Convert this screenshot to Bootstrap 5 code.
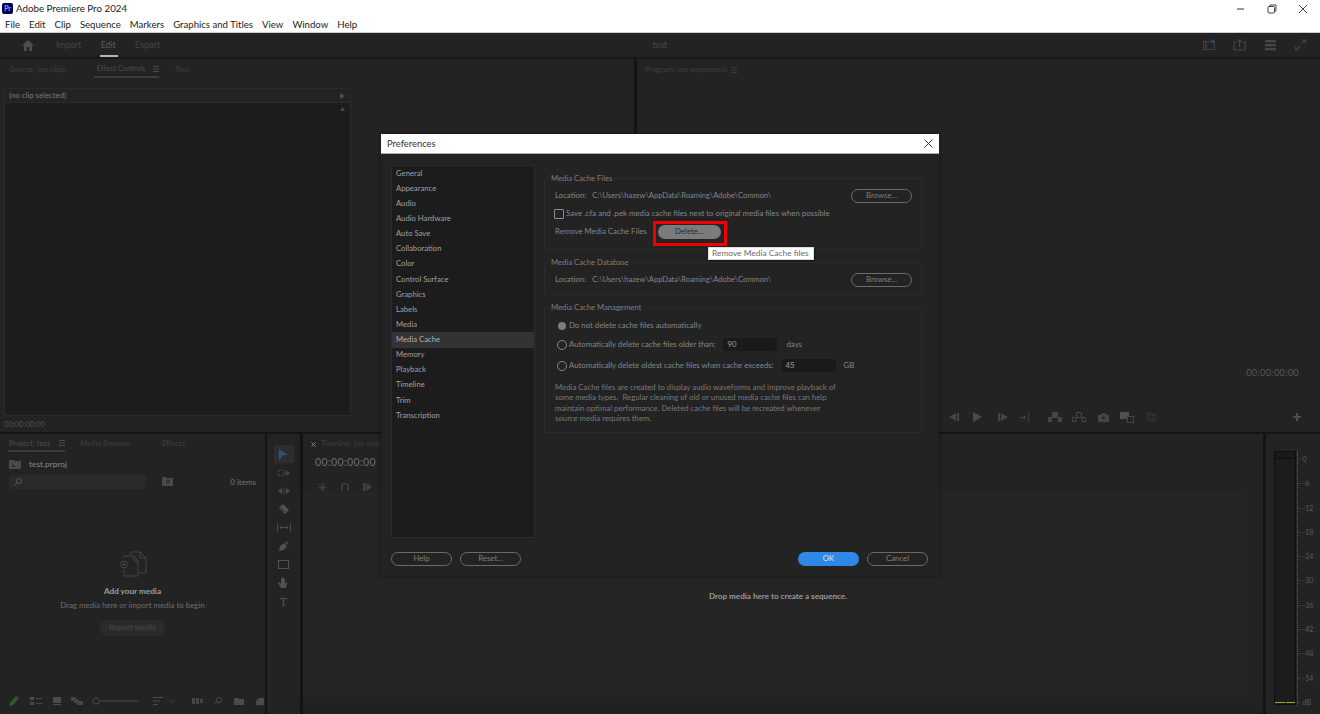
<!doctype html>
<html lang="en">
<head>
<meta charset="utf-8">
<title>Adobe Premiere Pro 2024</title>
<link href="https://cdn.jsdelivr.net/npm/bootstrap@5.3.0/dist/css/bootstrap.min.css" rel="stylesheet">
<style>
html,body{height:714px;overflow:hidden;background:#141414}
body{font-family:"Lato","Noto Sans",sans-serif;font-size:7.8px;line-height:1;color:#858585;position:relative}
svg{display:block;flex:none}
.win-head{height:33px;background:#fff;color:#222;font-family:"Lato","Noto Sans",sans-serif;flex:none;border-bottom:1px solid #ccc}
.win-title{height:17px;font-size:9.750px;padding-left:2px}
.pr-logo{width:11px;height:11px;background:#00005b;color:#9a9aff;font-size:7px;font-weight:700;border-radius:2px;margin-right:3px;letter-spacing:-.3px;line-height:11px;text-align:center}
.win-ctrl{width:31.500px;height:14px;display:flex;align-items:center;justify-content:center}
.win-ctrls{padding-right:1px}
.win-menu{height:15px;font-size:9.600px;padding-left:5px;gap:9px}
.top-bar{height:26px;background:#232323;border-bottom:2px solid #171717;flex:none;color:#444;font-size:8.600px;position:relative}
.top-nav{padding-left:22px;gap:19.500px}
.top-nav svg{margin-right:2.500px}
.nav-edit{color:#5f5f5f;position:relative;height:100%;display:flex;align-items:center}
.nav-edit::after{content:"";position:absolute;left:-1px;right:-2px;bottom:0;height:2px;background:#b5b5b5}
.top-name{position:absolute;left:0;right:0;top:8px;text-align:center;color:#4a4a4a;pointer-events:none}
.top-tools{gap:17.500px;padding-right:13px}
.work-row{gap:3px;flex:none}
.pane{background:#232323;position:relative;min-width:0}
.tab-row{height:21px;color:#3f3f3f;font-size:7.700px;flex:none}
.tab-low{height:20px}
.tab-on{color:#4c4c4c;border-bottom:2px solid #3c3c3c;padding:0 0 3px 2px;margin-bottom:-4px}
.upper-left{width:634px;height:373px;padding:0 4px}
.upper-right{flex:1;height:373px;padding:0 7px 0 8px}
.src-tab{padding-left:6px}
.src-tab>span:first-child{margin-right:28px}
.src-tab>.tab-on{margin-right:16px;letter-spacing:-.1px}
.src-tab svg{margin-left:7px}
.fx-head{width:347px;height:15px;margin-top:8px;background:#232323;border:1px solid #2a2a2a;color:#7b7b7b;padding:0 5px 0 4px;flex:none}
.fx-body{width:347px;height:313px;background:#1c1c1c;border:1px solid #2a2a2a;border-top:0;padding:4px 5px;flex:none}
.mini-time{color:#505050;height:18px;flex:none;font-size:7.600px}
.prog-time{color:#585858;font-size:9.200px;letter-spacing:.3px;margin-top:288px;margin-right:14px;text-align:right}
.prog-tools{margin-top:33px;height:14px;padding-left:304px;padding-right:12px}
.prog-tools svg:nth-child(1){margin-right:14px}
.prog-tools svg:nth-child(2){margin-right:16px}
.prog-tools svg:nth-child(3){margin-right:12px}
.prog-tools svg:nth-child(4){margin-right:17px}
.prog-tools svg:nth-child(5){margin-right:10px}
.prog-tools svg:nth-child(6){margin-right:12px}
.prog-tools svg:nth-child(7){margin-right:11px}
.prog-tools svg:nth-child(8){margin-right:13px}
.lower-row{gap:2px;height:280px;margin-top:2px;flex:none}
.proj{width:265px;padding:0 9px}
.tools{width:33px;padding-top:11px}
.tool{height:18.400px;width:20px;display:flex;align-items:center;justify-content:center}
.tool-on{background:#2d2d2d;border-radius:2px}
.serif-t{font-family:"Liberation Serif",serif;font-size:13px;color:#565656}
.tl{flex:1;position:relative;margin-left:1px}
.meter-pane{width:54px;padding:17px 0 9px 8px;margin-left:1px}
.meter{width:22px;height:254px;background:#1c1c1c;border:1px solid #0f0f0f;position:relative;flex:none}
.meter-top{height:7px;border-bottom:1px solid #0f0f0f;background:#1a1a1a}
.meter-top>div{flex:1}
.meter-top>div+div{border-left:1px solid #0f0f0f}
.meter-low{position:absolute;left:0;right:0;bottom:1px;gap:1px}
.meter-low>div{flex:1;height:1px;background:#a5a526}
.scale{height:255px;padding:5px 0 0 0;color:#5c5c5c;font-size:7px;border-left:1px dotted #5e5e5e;margin-left:1px}
.scale span::before{content:"-";margin-right:2px;color:#5c5c5c}
.proj-tab>.tab-on{margin-left:-1px;padding-left:1px;width:57px;justify-content:space-between}
.proj-tab>span:nth-child(2){margin-left:15px}
.proj-tab>span:nth-child(3){margin-left:31px}
.name-row{height:19px;margin-top:.500px;color:#8a8a8a;font-size:8.400px}
.search-row{height:16px}
.count-txt{color:#767676;font-size:8px}
.search-box{width:137px;height:14px;background:#2a2a2a;border-radius:2px;padding-left:5px;flex:none}
.empty-zone{position:absolute;left:0;width:265px;top:117px;text-align:center}
.add-title{color:#9e9e9e;font-size:8.200px;margin-top:10px}
.add-sub{color:#6d6d6d;margin-top:7px;font-size:7.900px}
.media-btn{width:65px;height:16px;background:#2b2b2b;color:#444;border-radius:8px;font-weight:700;margin:10px auto 0;font-size:7.900px}
.proj-foot{position:absolute;left:9px;top:261px;height:12px}
.proj-foot svg:nth-child(1){margin-right:10px}
.proj-foot svg:nth-child(2){margin-right:11px}
.proj-foot svg:nth-child(3){margin-right:10px}
.proj-foot svg:nth-child(4){margin-right:9px}
.proj-foot svg:nth-child(5){margin-right:14px}
.proj-foot svg:nth-child(6){margin-right:7px}
.proj-foot svg:nth-child(7){margin-right:17px}
.proj-foot svg:nth-child(8){margin-right:11px}
.proj-foot svg:nth-child(9){margin-right:12px}
.proj-foot svg:nth-child(10){margin-right:12px}
.tl-foot{position:absolute;left:0;right:0;bottom:0;height:17px;background:#212121}
.tl-main{position:absolute;left:0;right:17px;top:59px;bottom:17px;background:#252525}
.drop-msg{position:absolute;left:0;right:10px;top:158px;text-align:center;color:#9a9a9a;font-weight:700;font-size:8.100px;z-index:1}
.tl-time{color:#6e6e6e;font-size:10.500px;letter-spacing:.4px;margin:3px 0 0 12px}
.tl-name{margin-left:5px}
.tl-icons{gap:14px;margin:15px 0 0 15px}
.dialog-win{position:absolute;left:381px;top:134px;width:558px;height:442px;background:#232323;box-shadow:0 0 4px rgba(0,0,0,.45);font-size:7.800px}
.dlg-head{height:20px;background:#fff;color:#333;font-family:"Lato","Noto Sans",sans-serif;font-size:9.400px;padding:0 6px;flex:none;border-bottom:1px solid #aaa}
.dlg-main{height:398px;padding:11px 17px 0 10px;gap:9px;flex:none}
.side-list{width:144px;height:373px;background:#1c1c1c;border:1px solid #2c2c2c;padding:0;flex:none}
.side-item{height:15.125px;padding-left:4px;color:#a0a0a0;font-size:7.700px}
.side-on{background:#333;color:#b0b0b0}
.right-col{flex:1;min-width:0;padding-top:13px}
.grp{border:1px solid #2b2b2b;border-radius:2px;padding:0 9px 0 10px;position:relative;flex:none}
.grp-label{position:absolute;left:4px;top:-4px;background:#232323;padding:0 2px;color:#7f7f7f;font-size:7.700px;white-space:nowrap}
.grp-a{height:72px;padding-top:7px}
.grp-b{height:33px;margin-top:12px;padding-top:7px}
.grp-c{height:126px;margin-top:12px;padding-top:10px;padding-left:12px}
.browse-btn,.foot-btn{height:14px;border:1px solid #6a6a6a;border-radius:7px;color:#7f7f7f;width:61px;background:transparent;display:flex;align-items:center;justify-content:center}
.line-row{height:19px}
.save-row{height:17.500px}
.path-txt{margin-left:6px;font-size:7.550px}
.chk{width:10px;height:10px;border:1px solid #8a8a8a;border-radius:1px;margin:0 2px 0 -1px;flex:none}
.remove-row{height:19px;position:relative}
.del-slot{padding:1px 3px 0 2px;border:3px solid #f00000;margin:3px 0 0 6px;background:#232323;width:74px;height:25px;flex:none}
.del-btn{height:14px;width:63px;background:#7b7b7b;border-radius:7px;color:#2a2a2a;display:flex;align-items:center;justify-content:center}
.tip{position:absolute;left:153px;top:24.500px;width:106px;height:13px;background:#fff;color:#6b6b6b;border:1px solid #ddd;font-size:8.400px;padding-left:3px;box-shadow:1px 1px 2px rgba(0,0,0,.5);display:flex;align-items:center;white-space:nowrap;z-index:5}
.radio-on,.radio-off{width:10px;height:10px;border-radius:50%;margin-right:2px;flex:none}
.radio-on{background:#7d7d7d;transform:scale(.8)}
.radio-off{border:1px solid #8a8a8a}
.opt-one{height:16px}
.opt-row{height:21px}
.num-in{background:#1a1a1a;color:#a0a0a0;border-radius:2px;height:13.500px;padding-left:4px;display:flex;align-items:center;width:54px;margin:0 9px 0 8px}
.gb-txt{margin-left:-1px}
.note{color:#787878;margin:6px 0 0 -2px;line-height:10.350px;white-space:nowrap}
.dlg-foot{padding:0 11px 0 10px;flex:none;height:14px}
.dlg-foot>span:nth-child(1){margin-right:8px}
.dlg-foot>span:nth-child(3){margin-right:8px}
.ok-btn{background:#2d88e6;border:0;color:#d8e8fa;width:61px;height:14px;border-radius:7px;display:flex;align-items:center;justify-content:center}
</style>
</head>
<body class="d-flex flex-column">

<header class="win-head d-flex flex-column">
  <div class="win-title d-flex align-items-center">
    <div class="pr-logo">Pr</div><span>Adobe Premiere Pro 2024</span>
    <div class="win-ctrls d-flex ms-auto">
      <div class="win-ctrl"><svg width="9" height="9" viewBox="0 0 9 9"><path d="M1 5h7" stroke="#555" stroke-width="1.2"/></svg></div>
      <div class="win-ctrl"><svg width="10" height="10" viewBox="0 0 10 10" fill="none" stroke="#444"><rect x="1" y="2.500" width="6.500" height="6.500" rx="1"/><path d="M3 2.500V1h6v6H7.500"/></svg></div>
      <div class="win-ctrl"><svg width="10" height="10" viewBox="0 0 10 10"><path d="M1 1l8 8M9 1l-8 8" stroke="#444"/></svg></div>
    </div>
  </div>
  <nav class="win-menu d-flex align-items-center"><span>File</span><span>Edit</span><span>Clip</span><span>Sequence</span><span>Markers</span><span>Graphics and Titles</span><span>View</span><span>Window</span><span>Help</span></nav>
</header>

<div class="top-bar d-flex align-items-center">
  <div class="top-nav d-flex align-items-center h-100">
    <svg width="12" height="11" viewBox="0 0 13 12"><path d="M6.500 0L13 6h-2v6H8V8H5v4H2V6H0z" fill="#4d4d4d"/></svg>
    <span>Import</span><span class="nav-edit">Edit</span><span>Export</span>
  </div>
  <div class="top-name">test</div>
  <div class="top-tools d-flex ms-auto align-items-center">
    <svg width="13" height="12" viewBox="0 0 13 12" fill="none" stroke="#404040"><rect x=".5" y="2.500" width="11" height="8" stroke-width="1.2"/><path d="M3 3v7" stroke-width="1.500"/><circle cx="10" cy="2.500" r="2" fill="#214a76" stroke="none"/></svg>
    <svg width="13" height="12" viewBox="0 0 13 12" fill="none" stroke="#454545" stroke-width="1.2"><path d="M3.500 3H1v8h11V3H9.500M6.500 8V1M4.500 2.800l2-2 2 2"/></svg>
    <svg width="13" height="12" viewBox="0 0 13 12" fill="#454545"><rect x="1" y="1" width="11" height="2.400"/><rect x="1" y="5" width="11" height="2.400"/><rect x="1" y="9" width="11" height="2.400"/></svg>
    <svg width="13" height="12" viewBox="0 0 13 12" fill="none" stroke="#404040" stroke-width="1.2"><path d="M2 11l4-4M7 5l4-4M8 1h3.500v3.500M1.500 7.500V11H5"/></svg>
  </div>
</div>

<main class="work-row d-flex">
  <section class="pane upper-left d-flex flex-column">
    <div class="tab-row src-tab d-flex align-items-center">
      <span>Source: (no clips)</span>
      <span class="tab-on d-flex align-items-center">Effect Controls<svg width="6" height="6" viewBox="0 0 6 6"><path d="M0 .5h6M0 3h6M0 5.500h6" stroke="#4a4a4a"/></svg></span>
      <span>Text</span>
    </div>
    <div class="fx-head d-flex align-items-center justify-content-between">(no clip selected)<svg width="5" height="6" viewBox="0 0 5 6"><path d="M0 0l5 3-5 3z" fill="#4b4b4b"/></svg></div>
    <div class="fx-body d-flex justify-content-end"><svg width="5" height="4" viewBox="0 0 5 4"><path d="M2.500 0L5 4H0z" fill="#484848"/></svg></div>
    <div class="mini-time d-flex align-items-center">00:00:00:00</div>
  </section>
  <section class="pane upper-right d-flex flex-column">
    <div class="tab-row d-flex align-items-center">
      <span>Program: (no sequences)</span>
      <svg class="ms-1" width="6" height="6" viewBox="0 0 6 6"><path d="M0 .5h6M0 3h6M0 5.500h6" stroke="#3e3e3e"/></svg>
    </div>
    <div class="prog-time">00:00:00:00</div>
    <div class="prog-tools d-flex align-items-center">
      <svg width="10" height="8" viewBox="0 0 10 8" fill="#454545"><path d="M7 0v8L0 4zM8 0h2v8H8z"/></svg>
      <svg width="9" height="10" viewBox="0 0 9 10" fill="#4a4a4a"><path d="M0 0l9 5-9 5z"/></svg>
      <svg width="10" height="8" viewBox="0 0 10 8" fill="#454545"><path d="M3 0v8l7-4zM0 0h2v8H0z"/></svg>
      <svg width="11" height="9" viewBox="0 0 11 9" fill="none" stroke="#454545"><path d="M0 4.500h5M3.500 2.500l2 2-2 2M9 0c-1 1 0 3-1 4.500C9 6 8 8 9 9"/></svg>
      <svg width="14" height="10" viewBox="0 0 14 10" fill="#454545"><path d="M0 5h4v5H0zM10 5h4v5h-4zM4 0h6v6H4z"/></svg>
      <svg width="14" height="10" viewBox="0 0 14 10" fill="none" stroke="#454545"><path d="M.5 5.500h3.500v4H.5zM10 5.500h3.500v4H10zM4.500.500h5v5h-5z"/></svg>
      <svg width="11" height="9" viewBox="0 0 11 9" fill="#454545"><path d="M0 2h3l1-2h3l1 2h3v7H0z"/><circle cx="5.500" cy="5" r="1.500" fill="#232323"/></svg>
      <svg width="14" height="11" viewBox="0 0 14 11"><rect x="0" y="0" width="9" height="7" fill="#505050"/><rect x="7.500" y="4.500" width="6" height="6" fill="#232323" stroke="#454545"/></svg>
      <svg width="9" height="9" viewBox="0 0 9 9" fill="none" stroke="#3e3e3e" stroke-dasharray="1.500 1"><rect x=".5" y=".5" width="6" height="6"/><rect x="2.500" y="2.500" width="6" height="6"/></svg>
      <svg class="ms-auto" width="8" height="8" viewBox="0 0 8 8"><path d="M4 0v8M0 4h8" stroke="#4c4c4c" stroke-width="2"/></svg>
    </div>
  </section>
</main>

<section class="lower-row d-flex">
  <div class="pane proj">
    <div class="tab-row tab-low proj-tab d-flex align-items-center">
      <span class="tab-on d-flex align-items-center">Project: test<svg width="6" height="6" viewBox="0 0 6 6"><path d="M0 .5h6M0 3h6M0 5.500h6" stroke="#4a4a4a"/></svg></span>
      <span>Media Browser</span>
      <span>Effects</span>
    </div>
    <div class="name-row d-flex align-items-center">
      <svg width="12" height="9" viewBox="0 0 12 9"><path d="M0 0h5l1 1h6v8H0z" fill="#4a4a4a"/><path d="M3 6.500h3M4 4v2" stroke="#232323"/></svg>
      <span class="ms-2">test.prproj</span>
    </div>
    <div class="search-row d-flex align-items-center">
      <div class="search-box d-flex align-items-center"><svg width="8" height="8" viewBox="0 0 8 8" fill="none" stroke="#555"><circle cx="5" cy="3" r="2.500"/><path d="M3 5L.5 7.500"/></svg></div>
      <svg class="ms-3" width="11" height="9" viewBox="0 0 11 9"><path d="M0 0h4l1 1h6v8H0z" fill="#4a4a4a"/><circle cx="6" cy="4.500" r="1.500" fill="none" stroke="#232323"/></svg>
      <span class="ms-auto count-txt">0 items</span>
    </div>
    <div class="empty-zone">
      <svg class="mx-auto" width="28" height="26" viewBox="0 0 28 26" fill="none" stroke="#454545"><path d="M12 4V1h9l6 6v15h-8"/><path d="M5 7V5h10l4 5v15H5v-6"/><path d="M21 1v6h6M15 5v5h4"/><circle cx="5" cy="13.500" r="3.500"/><path d="M3 13.500h4M5 11.500v4"/></svg>
      <div class="fw-bold add-title">Add your media</div>
      <div class="add-sub">Drag media here or import media to begin</div>
      <div class="media-btn d-flex align-items-center justify-content-center">Import media</div>
    </div>
    <div class="proj-foot d-flex align-items-center">
      <svg width="11" height="10" viewBox="0 0 11 10"><path d="M0 10l1-3 6-7 3 2-6 7z" fill="#2e5e27"/></svg>
      <svg width="12" height="8" viewBox="0 0 12 8" fill="#4a4a4a"><rect width="4" height="3"/><rect y="5" width="4" height="3"/><rect x="6" y="1" width="6" height="1"/><rect x="6" y="6" width="6" height="1"/></svg>
      <svg width="8" height="8" viewBox="0 0 8 8" fill="#4c4c4c"><rect width="8" height="6"/><rect y="7" width="8" height="1"/></svg>
      <svg width="12" height="8" viewBox="0 0 12 8" fill="#454545"><rect width="5" height="4"/><rect x="3" y="2" width="5" height="4"/><rect x="6" y="4" width="6" height="4"/></svg>
      <svg width="47" height="8" viewBox="0 0 47 8" fill="none" stroke="#4c4c4c"><circle cx="4" cy="4" r="3.200"/><path d="M8 4h39" stroke-width="1.200"/></svg>
      <svg width="10" height="8" viewBox="0 0 10 8" stroke="#4c4c4c"><path d="M0 .5h10M0 4h7M0 7.500h5"/></svg>
      <svg width="5" height="3" viewBox="0 0 5 3" fill="none" stroke="#3e3e3e"><path d="M0 0l2.500 2.500L5 0"/></svg>
      <svg width="11" height="6" viewBox="0 0 11 6" fill="#464646"><rect width="3" height="6"/><rect x="4" width="3" height="6"/><rect x="8" y="1" width="3" height="4"/></svg>
      <svg width="8" height="8" viewBox="0 0 8 8" fill="none" stroke="#4a4a4a"><circle cx="5" cy="3" r="2.500"/><path d="M3 5L.5 7.500"/></svg>
      <svg width="10" height="7" viewBox="0 0 10 7"><path d="M0 0h4l1 1h5v6H0z" fill="#4b4b4b"/></svg>
      <svg width="8" height="7" viewBox="0 0 8 7"><path d="M3 0h5v7H0V3z" fill="#4a4a4a"/></svg>
    </div>
  </div>

  <div class="pane tools d-flex flex-column align-items-center">
    <div class="tool tool-on"><svg width="9" height="11" viewBox="0 0 9 11"><path d="M0 0l9 6H5l-1 0-4 5z" fill="#31537a"/></svg></div>
    <div class="tool"><svg width="12" height="8" viewBox="0 0 12 8" fill="none" stroke="#4c4c4c"><path d="M.5 1.500h7M.5 6.500h7M.5 1.500v5" stroke-dasharray="1.500 1"/><path d="M5 4h5M8.500 2l2.500 2-2.500 2" stroke-width="1.200"/></svg></div>
    <div class="tool"><svg width="12" height="8" viewBox="0 0 12 8" fill="#4c4c4c"><path d="M5.600 0h.8v8h-.8zM0 4l4-3v6zM12 4L8 1v6z"/></svg></div>
    <div class="tool"><svg width="10" height="10" viewBox="0 0 10 10" fill="#515151"><path d="M4 0l6 6-4 4-6-6z"/><path d="M1.500 4l4 4" stroke="#232323"/></svg></div>
    <div class="tool"><svg width="14" height="9" viewBox="0 0 14 9" fill="none" stroke="#4c4c4c"><path d="M.5 0v9M13.500 0v9M3 4.500h8M4.500 3L3 4.500 4.500 6M9.500 3L11 4.500 9.500 6"/></svg></div>
    <div class="tool"><svg width="10" height="10" viewBox="0 0 10 10" fill="#515151"><path d="M0 10l1-5 4-3 3 3-3 4zM6 1l1-1 3 3-1 1z"/></svg></div>
    <div class="tool"><svg width="11" height="9" viewBox="0 0 11 9" fill="none" stroke="#515151"><rect x=".5" y=".5" width="10" height="8"/></svg></div>
    <div class="tool"><svg width="11" height="11" viewBox="0 0 11 11" fill="#515151"><path d="M3 11L0 6l1-1 2 2V1.500h1V5V.5h1V5V1h1v4V2h1v5l1.500-2 1 .5L8 11z"/></svg></div>
    <div class="tool serif-t">T</div>
  </div>

  <div class="pane tl">
    <div class="tab-row tab-low d-flex align-items-center ps-2">
      <svg width="5" height="5" viewBox="0 0 5 5"><path d="M.5.5l4 4M4.500.5l-4 4" stroke="#8a8a8a"/></svg>
      <span class="tl-name">Timeline: (no sequences)</span>
    </div>
    <div class="tl-time">00:00:00:00</div>
    <div class="tl-icons d-flex align-items-center">
      <svg width="9" height="9" viewBox="0 0 10 10" stroke="#424242"><path d="M5 0v10M0 5h10M1.500 1.500l7 7M8.500 1.500l-7 7"/></svg>
      <svg width="8" height="8" viewBox="0 0 9 9" fill="none" stroke="#454545" stroke-width="1.500"><path d="M1 9V4a3.500 3.500 0 017 0v5"/></svg>
      <svg width="9" height="8" viewBox="0 0 10 9" fill="#424242"><path d="M0 0h3v9H0zM4 0l6 4.500L4 9z"/></svg>
    </div>
    <div class="tl-main"></div>
    <div class="drop-msg">Drop media here to create a sequence.</div>
    <div class="tl-foot"></div>
  </div>

  <div class="pane meter-pane d-flex">
    <div class="meter">
      <div class="meter-top d-flex"><div></div><div></div></div>
      <div class="meter-low d-flex"><div></div><div></div></div>
    </div>
    <div class="scale d-flex flex-column justify-content-between">
      <span>0</span><span>-6</span><span>-12</span><span>-18</span><span>-24</span><span>-30</span><span>-36</span><span>-42</span><span>-48</span><span>-54</span><span>dB</span>
    </div>
  </div>
</section>

<div class="dialog-win d-flex flex-column" role="dialog">
  <div class="dlg-head d-flex align-items-center justify-content-between">
    <span>Preferences</span>
    <svg width="9" height="9" viewBox="0 0 9 9"><path d="M.5.5l8 8M8.500.5l-8 8" stroke="#333"/></svg>
  </div>
  <div class="dlg-main d-flex">
    <div class="side-list">
      <div class="side-item d-flex align-items-center">General</div>
      <div class="side-item d-flex align-items-center">Appearance</div>
      <div class="side-item d-flex align-items-center">Audio</div>
      <div class="side-item d-flex align-items-center">Audio Hardware</div>
      <div class="side-item d-flex align-items-center">Auto Save</div>
      <div class="side-item d-flex align-items-center">Collaboration</div>
      <div class="side-item d-flex align-items-center">Color</div>
      <div class="side-item d-flex align-items-center">Control Surface</div>
      <div class="side-item d-flex align-items-center">Graphics</div>
      <div class="side-item d-flex align-items-center">Labels</div>
      <div class="side-item d-flex align-items-center">Media</div>
      <div class="side-item side-on d-flex align-items-center">Media Cache</div>
      <div class="side-item d-flex align-items-center">Memory</div>
      <div class="side-item d-flex align-items-center">Playback</div>
      <div class="side-item d-flex align-items-center">Timeline</div>
      <div class="side-item d-flex align-items-center">Trim</div>
      <div class="side-item d-flex align-items-center">Transcription</div>
    </div>
    <div class="right-col">
      <div class="grp grp-a">
        <div class="grp-label">Media Cache Files</div>
        <div class="line-row d-flex align-items-center justify-content-between"><span>Location:<span class="path-txt">C:\Users\hazew\AppData\Roaming\Adobe\Common\</span></span><span class="browse-btn">Browse...</span></div>
        <div class="save-row d-flex align-items-center"><span class="chk"></span><span>Save .cfa and .pek media cache files next to original media files when possible</span></div>
        <div class="remove-row d-flex align-items-center">
          <span>Remove Media Cache Files</span>
          <div class="del-slot"><div class="del-btn">Delete...</div></div>
          <div class="tip">Remove Media Cache files</div>
        </div>
      </div>
      <div class="grp grp-b">
        <div class="grp-label">Media Cache Database</div>
        <div class="line-row d-flex align-items-center justify-content-between"><span>Location:<span class="path-txt">C:\Users\hazew\AppData\Roaming\Adobe\Common\</span></span><span class="browse-btn">Browse...</span></div>
      </div>
      <div class="grp grp-c">
        <div class="grp-label">Media Cache Management</div>
        <div class="opt-one d-flex align-items-center"><span class="radio-on"></span><span>Do not delete cache files automatically</span></div>
        <div class="opt-row d-flex align-items-center"><span class="radio-off"></span><span>Automatically delete cache files older than:</span><span class="num-in">90</span><span>days</span></div>
        <div class="opt-row d-flex align-items-center"><span class="radio-off"></span><span>Automatically delete oldest cache files when cache exceeds:</span><span class="num-in">45</span><span class="gb-txt">GB</span></div>
        <div class="note">Media Cache files are created to display audio waveforms and improve playback of<br>some media types.&nbsp; Regular cleaning of old or unused media cache files can help<br>maintain optimal performance. Deleted cache files will be recreated whenever<br>source media requires them.</div>
      </div>
    </div>
  </div>
  <div class="dlg-foot d-flex align-items-center">
    <span class="foot-btn">Help</span><span class="foot-btn">Reset...</span>
    <span class="ok-btn ms-auto">OK</span><span class="foot-btn">Cancel</span>
  </div>
</div>
<script src="https://cdn.jsdelivr.net/npm/bootstrap@5.3.0/dist/js/bootstrap.bundle.min.js"></script>
</body>
</html>
